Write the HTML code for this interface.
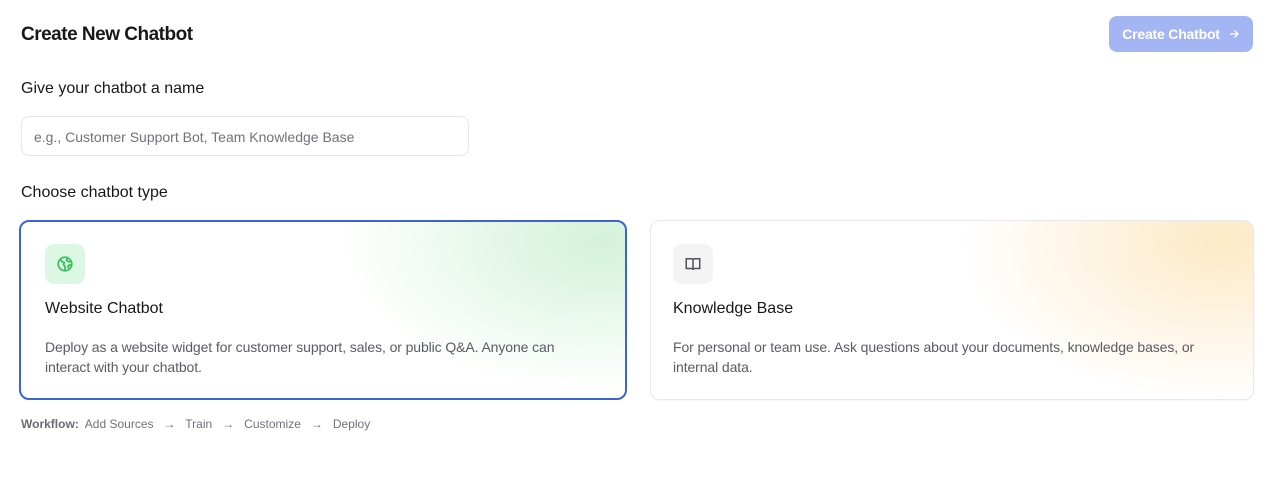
<!DOCTYPE html>
<html><head><style>
*{box-sizing:border-box;margin:0;padding:0}
body{width:1280px;height:488px;background:#fff;font-family:"Liberation Sans",sans-serif;color:#18181b;position:relative;overflow:hidden}
.abs{position:absolute}
h1{position:absolute;left:21px;top:24px;font-size:19px;font-weight:700;letter-spacing:-0.5px}
.btn{left:1109px;top:16px;width:144px;height:36px;border-radius:8px;background:#a4b5f4;color:#fff;font-size:14px;font-weight:700;display:flex;align-items:center;justify-content:center;gap:8px;letter-spacing:-0.2px}
.lbl{font-size:16px;font-weight:500;left:21px}
.inp{left:21px;top:116px;width:448px;height:40px;border:1px solid #e6e6ea;border-radius:8px;font-size:14px;color:#71717a;padding:12px 12px}
.card{top:220px;height:180px;border-radius:10px;border:1px solid #e8e8ec;overflow:hidden}
.c1{left:19px;width:608px;border:2px solid #3f63d6;background:radial-gradient(ellipse 260px 150px at 580px 20px,#d3f2da,rgba(255,255,255,0) 100%),#fff}
.c2{left:650px;width:604px;background:radial-gradient(ellipse 260px 160px at 570px 20px,#fde9c6,rgba(255,255,255,0) 100%),#fff;box-shadow:0 1px 2px rgba(0,0,0,.05)}
.ic{position:absolute;left:23px;top:23px;width:40px;height:40px;border-radius:9px;display:flex;align-items:center;justify-content:center}
.t{position:absolute;left:23px;top:79px;font-size:16px;font-weight:500}
.d{position:absolute;left:23px;top:116px;font-size:14px;line-height:20px;color:#5b5b63;width:545px;letter-spacing:-0.1px}
.wf{left:21px;top:417px;font-size:12px;color:#71717a}
</style></head><body>
<h1>Create New Chatbot</h1>
<div class="abs btn">Create Chatbot <svg width="12" height="12" viewBox="0 0 24 24" fill="none" stroke="#fff" stroke-width="2.5"><path d="M4 12h16M13 5l7 7-7 7"/></svg></div>
<div class="abs lbl" style="top:80px">Give your chatbot a name</div>
<div class="abs inp">e.g., Customer Support Bot, Team Knowledge Base</div>
<div class="abs lbl" style="top:184px">Choose chatbot type</div>
<div class="abs card c1">
<div class="ic" style="left:24px;top:22px;background:#dcf7e3"><svg width="18" height="18" viewBox="0 0 24 24" fill="none" stroke="#3fbf61" stroke-width="2.4"><circle cx="12" cy="12" r="9"/><path d="M6 6l2 3 3 1-1 3 2 2v5M15 4l-1 3 3 2 4 0M21 14l-3-1-2 2 1 3"/></svg></div>
<div class="t" style="left:24px;top:78px">Website Chatbot</div>
<div class="d" style="left:24px;top:115px">Deploy as a website widget for customer support, sales, or public Q&amp;A. Anyone can interact with your chatbot.</div>
</div>
<div class="abs card c2">
<div class="ic" style="left:22px;background:#f4f4f5"><svg width="18" height="18" viewBox="0 0 24 24" fill="none" stroke="#52525b" stroke-width="2"><path d="M3 5h7a2 2 0 012 2v13a2 2 0 00-2-2H3zM21 5h-7a2 2 0 00-2 2v13a2 2 0 012-2h7z"/></svg></div>
<div class="t" style="left:22px">Knowledge Base</div>
<div class="d" style="left:22px">For personal or team use. Ask questions about your documents, knowledge bases, or internal data.</div>
</div>
<div class="abs wf"><b style="font-weight:700;color:#6b6b73">Workflow:</b>&nbsp; Add Sources &nbsp;&nbsp;→&nbsp;&nbsp; Train &nbsp;&nbsp;→&nbsp;&nbsp; Customize &nbsp;&nbsp;→&nbsp;&nbsp; Deploy</div>
</body></html>
